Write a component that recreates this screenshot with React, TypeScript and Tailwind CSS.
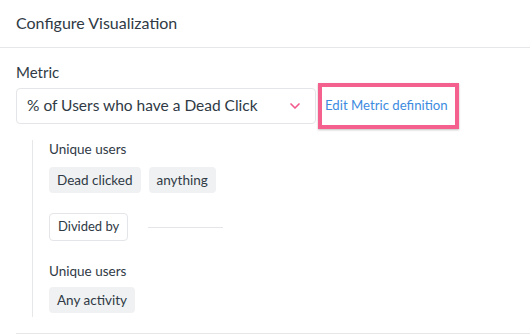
import { ChevronDown } from 'lucide-react';

function Chip({ label }: { label: string }) {
  return (
    <span className="inline-flex h-[26px] items-center rounded-[4px] bg-[#f0f1f3] px-2 text-[13.5px] text-[#2f3a45]">
      {label}
    </span>
  );
}

export default function App() {
  return (
    <div className="h-[334px] w-[530px] overflow-hidden bg-white font-['Lato',sans-serif] text-[#2f3a45]">
      {/* Header */}
      <div className="flex h-[48px] items-center border-b border-[#e6e7e9] px-4 pb-[2px] text-[16px]">
        Configure Visualization
      </div>

      <div className="ml-4 border-b border-[#e6e7e9] pb-4">
        <div className="pt-[15px] text-[15px] leading-[18px]">Metric</div>

        <div className="mt-[2px] flex items-center">
          <div className="flex h-[36px] w-[300px] items-center justify-between rounded-[4px] border border-[#e3e5e8] pl-[10px] pr-[12px] text-[15.5px]">
            <span>% of Users who have a Dead Click</span>
            <ChevronDown className="h-4 w-4 text-[#f2588a]" strokeWidth={2.5} />
          </div>
          <div className="ml-[2px] flex h-[46px] w-[141px] items-center border-[4px] border-[#f4618f] pl-[3px] text-[13.2px] text-[#3d8be0] shadow-[0_1px_2px_rgba(0,0,0,0.25)]">
            Edit Metric definition
          </div>
        </div>

        <div className="ml-[16px] mt-[11px] flex flex-col border-l border-[#e6e7e9] pb-[4px] pl-[16px]">
          <div className="text-[13.5px] leading-[18px]">Unique users</div>
          <div className="mt-[9px] flex gap-2">
            <Chip label="Dead clicked" />
            <Chip label="anything" />
          </div>

          <div className="mt-[20px] flex items-center">
            <span className="inline-flex h-[28px] items-center rounded-[4px] border border-[#e3e5e8] px-2 text-[13px]">
              Divided by
            </span>
            <div className="ml-[20px] h-px w-[75px] bg-[#e3e5e8]" />
          </div>

          <div className="mt-[21px] text-[13.5px] leading-[18px]">Unique users</div>
          <div className="mt-[7px] flex">
            <Chip label="Any activity" />
          </div>
        </div>
      </div>
    </div>
  );
}
